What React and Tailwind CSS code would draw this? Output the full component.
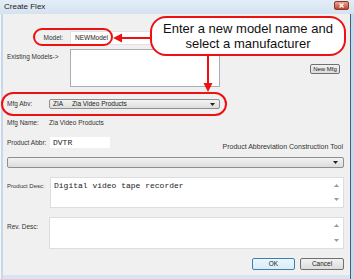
import React from 'react';

const Caret = () => (
  <svg width="5" height="3" viewBox="0 0 5 3" className="shrink-0">
    <path d="M0 0h5L2.5 3z" fill="#222" />
  </svg>
);

const ScrollArrows = () => (
  <div className="flex flex-col justify-between h-full py-[6px] pr-[4px]">
    <svg width="5" height="3" viewBox="0 0 5 3"><path d="M0 3h5L2.5 0z" fill="#9a9a9a" /></svg>
    <svg width="5" height="3" viewBox="0 0 5 3"><path d="M0 0h5L2.5 3z" fill="#9a9a9a" /></svg>
  </div>
);

const App = () => {
  return (
    <div className="relative w-[354px] h-[279px] overflow-hidden bg-[#d8e4f1] font-['Liberation_Sans',Arial,sans-serif] text-[#333]">
      {/* title bar */}
      <div className="h-[14px] flex items-start bg-gradient-to-b from-[#e4edf7] to-[#d5e2f0]">
        <span className="ml-[4px] mt-[2px] text-[8px] leading-[10px] text-[#1c1c1c]">Create Flex</span>
        <div className="ml-auto mr-[5px] mt-[1px] w-[15px] h-[9px] rounded-[2px] border border-[#8a3a2c] bg-gradient-to-b from-[#e8a493] to-[#c0432d] flex items-center justify-center">
          <svg width="5" height="5" viewBox="0 0 5 5"><path d="M0.5 0.5l4 4M4.5 0.5l-4 4" stroke="#fff" strokeWidth="1.3" /></svg>
        </div>
      </div>

      {/* frame + content */}
      <div className="flex h-[265px]">
        <div className="w-[1px] bg-[#f4f8fc]" />
        <div className="w-[2px] bg-[#c7d8eb]" />
        <div className="w-[347px] h-[261px] bg-[#f0f0f0] flex flex-col pl-[4px] pr-[6px] text-[6.5px] leading-[8px]">
          {/* Model */}
          <div className="flex items-center mt-[17px] h-[14px]">
            <span className="w-[57px] text-right pr-[1px]">Model:</span>
            <div className="ml-[6px] w-[150px] h-[14px] bg-white border border-[#e2e3ea] flex items-center pl-[4px] text-[#222]">NEWModel</div>
          </div>

          {/* Existing models */}
          <div className="flex mt-[4px] h-[38px]">
            <span className="w-[63px] mt-[4px]">Existing Models-&gt;</span>
            <div className="w-[150px] h-[38px] bg-white border border-[#abadb3]" />
            <button className="ml-auto mr-[4px] mt-[15px] w-[30px] h-[10px] rounded-[2px] border border-[#707070] bg-gradient-to-b from-[#f2f2f2] to-[#dcdcdc] text-[6px] leading-[8px] text-[#222]">New Mfg</button>
          </div>

          {/* Mfg Abv */}
          <div className="flex items-center mt-[12px] h-[10px]">
            <span className="w-[42px]">Mfg Abv:</span>
            <div className="w-[171px] h-[10px] rounded-[2px] border border-[#8e8f8f] bg-gradient-to-b from-[#f3f3f3] to-[#dedede] flex items-center pl-[3px] pr-[4px] text-[#222]">
              <span className="w-[19px]">ZIA</span>
              <span>Zia Video Products</span>
              <span className="ml-auto"><Caret /></span>
            </div>
          </div>

          {/* Mfg Name */}
          <div className="flex items-center mt-[10px] h-[8px]">
            <span className="w-[42px]">Mfg Name:</span>
            <span>Zia Video Products</span>
          </div>

          {/* Product Abbr + tool */}
          <div className="flex items-end mt-[10px] h-[11px]">
            <span className="w-[43px] self-center">Product Abbr:</span>
            <div className="w-[60px] h-[11px] bg-white flex items-center pl-[3px] font-['Liberation_Mono','Courier_New',monospace] text-[8px] text-[#222]">DVTR</div>
            <span className="ml-auto mr-[1px] mb-[-3px] text-[7px]">Product Abbreviation Construction Tool</span>
          </div>

          {/* full select */}
          <div className="mt-[9px] h-[11px] rounded-[2px] border border-[#8e8f8f] bg-gradient-to-b from-[#f3f3f3] to-[#dcdcdc] flex items-center justify-end pr-[5px]">
            <Caret />
          </div>

          {/* Product Desc */}
          <div className="flex mt-[9px] h-[31px]">
            <span className="w-[43px] mt-[5px] text-[6px]">Product Desc:</span>
            <div className="flex-1 h-[31px] bg-white border border-[#dcdde3] flex">
              <span className="flex-1 pl-[3px] pt-[3px] font-['Liberation_Mono','Courier_New',monospace] text-[8px] leading-[9px] text-[#222]">Digital video tape recorder</span>
              <ScrollArrows />
            </div>
          </div>

          {/* Rev Desc */}
          <div className="flex mt-[9px] h-[32px]">
            <span className="w-[42px] mt-[6px]">Rev. Desc:</span>
            <div className="flex-1 h-[32px] bg-white border border-[#dcdde3] flex">
              <span className="flex-1" />
              <ScrollArrows />
            </div>
          </div>

          {/* buttons */}
          <div className="flex justify-end gap-[5px] mt-[9px]">
            <button className="w-[43px] h-[12px] rounded-[2px] border border-[#3c7fb1] bg-gradient-to-b from-[#eaf6fd] to-[#d9ecf7] text-[6.5px] leading-[8px] text-[#222]">OK</button>
            <button className="w-[44px] h-[12px] rounded-[2px] border border-[#707070] bg-gradient-to-b from-[#f2f2f2] to-[#dcdcdc] text-[6.5px] leading-[8px] text-[#222]">Cancel</button>
          </div>
        </div>
        <div className="w-[1px] bg-[#3f5e7c]" />
        <div className="w-[3px] bg-[#c7d8eb]" />
      </div>
      <div className="h-[2px] bg-[#27475f]" />

      {/* callout overlays */}
      <div className="absolute left-[33px] top-[28px] w-[80px] h-[18px] rounded-full border-2 border-[#ee1111]" />
      <div className="absolute left-[1px] top-[92px] w-[226px] h-[24px] rounded-full border-2 border-[#ee1111]" />
      <div className="absolute left-[150px] top-[16px] w-[196px] h-[40px] rounded-[16px] border-2 border-[#ee1111] bg-white flex flex-col items-center justify-center text-[13px] leading-[15px] text-[#111]">
        <span>Enter a new model name and</span>
        <span>select a manufacturer</span>
      </div>
      <svg className="absolute inset-0 pointer-events-none" width="354" height="279" viewBox="0 0 354 279">
        <path d="M150 38H121" stroke="#ee1111" strokeWidth="2" />
        <path d="M113 38l9-4.5v9z" fill="#ee1111" />
        <path d="M208 56V84" stroke="#ee1111" strokeWidth="2" />
        <path d="M208 92l-4.5-9h9z" fill="#ee1111" />
      </svg>
    </div>
  );
};

export default App;
